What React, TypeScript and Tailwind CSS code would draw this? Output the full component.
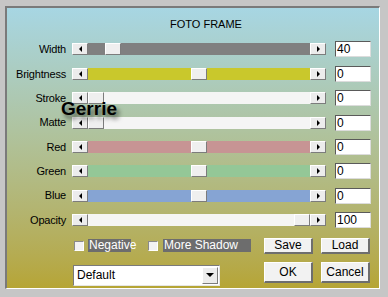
import React from 'react';

const font = { fontFamily: '"Liberation Sans", Arial, sans-serif' };

const rows = [
  { label: 'Width', track: 'bg-[#808080]', thumb: 17, value: '40' },
  { label: 'Brightness', track: 'bg-[#c9c82c]', thumb: 103, value: '0' },
  { label: 'Stroke', track: 'bg-[#f5f5f5]', thumb: 0, value: '0' },
  { label: 'Matte', track: 'bg-[#f5f5f5]', thumb: 0, value: '0' },
  { label: 'Red', track: 'bg-[#c79494]', thumb: 103, value: '0' },
  { label: 'Green', track: 'bg-[#94c797]', thumb: 103, value: '0' },
  { label: 'Blue', track: 'bg-[#86a4d3]', thumb: 103, value: '0' },
  { label: 'Opacity', track: 'bg-[#f5f5f3]', thumb: 206, value: '100' },
];

function ArrowBtn({ dir }: { dir: 'left' | 'right' }) {
  return (
    <div className="w-[16px] h-[12px] bg-[#ececec] border-t border-l border-white border-b border-r border-b-[#7c7c7c] border-r-[#7c7c7c] flex items-center justify-center shrink-0">
      {dir === 'left' ? (
        <div className="w-0 h-0 border-y-[3px] border-y-transparent border-r-[3px] border-r-black" />
      ) : (
        <div className="w-0 h-0 border-y-[3px] border-y-transparent border-l-[3px] border-l-black" />
      )}
    </div>
  );
}

function Slider({ track, thumb }: { track: string; thumb: number }) {
  return (
    <div className="flex items-center">
      <ArrowBtn dir="left" />
      <div className={`relative w-[222px] h-[12px] ${track}`}>
        <div
          className="absolute top-0 w-[16px] h-[12px] bg-[#efefef] border-t border-l border-white border-b border-r border-b-[#7c7c7c] border-r-[#7c7c7c]"
          style={{ left: thumb }}
        />
      </div>
      <ArrowBtn dir="right" />
    </div>
  );
}

function Checkbox() {
  return (
    <div className="w-[10px] h-[10px] bg-[#f2f2f2] border-t border-l border-[#8a8a8a] border-b border-r border-b-white border-r-white shrink-0" />
  );
}

function Button({ label, h }: { label: string; h: string }) {
  return (
    <div
      className={`w-[49px] ${h} bg-[#f2f2f2] border-t border-l border-white border-b-2 border-r-2 border-b-[#6e6e6e] border-r-[#6e6e6e] flex items-center justify-center text-[12px] text-black`}
    >
      {label}
    </div>
  );
}

export default function App() {
  return (
    <div className="w-[388px] h-[297px] bg-[#c6c6c6] pl-[5px] pt-[6px] pr-[8px] pb-[8px]" style={font}>
      <div className="relative w-full h-full border-t-2 border-l-2 border-[#7a7a7a] border-b border-r border-b-white border-r-white bg-gradient-to-b from-[#a7d6e3] via-[#b0c095] to-[#b6a535]">
        {/* Title */}
        <div className="pt-[10px] h-[23px] pl-[163px] text-[11px] leading-[13px] text-black">FOTO FRAME</div>

        {/* Sliders */}
        <div className="mt-[6.3px] flex flex-col">
          {rows.map((r) => (
            <div key={r.label} className="h-[24.36px] flex items-center">
              <div className="w-[59px] text-right text-[11px] tracking-[-0.2px] text-black">{r.label}</div>
              <div className="ml-[6px]">
                <Slider track={r.track} thumb={r.thumb} />
              </div>
              <div className="ml-[9px] w-[36px] h-[16px] bg-white border-t border-l border-[#5a5a5a] border-b border-r border-b-[#dcdcdc] border-r-[#dcdcdc] pl-[1px] text-[12px] leading-[14px] text-black">
                {r.value}
              </div>
            </div>
          ))}
        </div>

        {/* Options row */}
        <div className="mt-[5.8px] h-[16px] flex items-center">
          <div className="ml-[67px]">
            <Checkbox />
          </div>
          <div className="ml-[4px] w-[43px] h-[13px] bg-[#6d6d6d] text-white text-[12px] leading-[13px] pl-[1px]">Negative</div>
          <div className="ml-[17px]">
            <Checkbox />
          </div>
          <div className="ml-[5px] w-[88px] h-[13px] bg-[#6d6d6d] text-white text-[12px] leading-[13px] pl-[1px]">More Shadow</div>
          <div className="ml-[13px]">
            <Button label="Save" h="h-[16px]" />
          </div>
          <div className="ml-[8px]">
            <Button label="Load" h="h-[16px]" />
          </div>
        </div>

        {/* Bottom row */}
        <div className="mt-[8px] flex items-start">
          <div className="ml-[66px] mt-[3px] w-[147px] h-[21px] bg-white border-t border-l border-[#7a7a7a] border-b border-r border-b-[#e6e6e6] border-r-[#e6e6e6] flex items-center">
            <div className="flex-1 pl-[3px] text-[12px] text-black">Default</div>
            <div className="w-[16px] h-[17px] mr-[1px] bg-[#ececec] border-t border-l border-white border-b border-r border-b-[#7c7c7c] border-r-[#7c7c7c] flex items-center justify-center">
              <div className="w-0 h-0 border-x-[4px] border-x-transparent border-t-[4px] border-t-black" />
            </div>
          </div>
          <div className="ml-[44px]">
            <Button label="OK" h="h-[21px]" />
          </div>
          <div className="ml-[8px]">
            <Button label="Cancel" h="h-[21px]" />
          </div>
        </div>

        {/* Watermark */}
        <div
          className="absolute left-[54px] top-[90px] text-[19px] font-bold leading-[22px] text-black"
          style={{ textShadow: '3px 4px 4px rgba(0,0,0,0.55)' }}
        >
          Gerrie
        </div>
      </div>
    </div>
  );
}
